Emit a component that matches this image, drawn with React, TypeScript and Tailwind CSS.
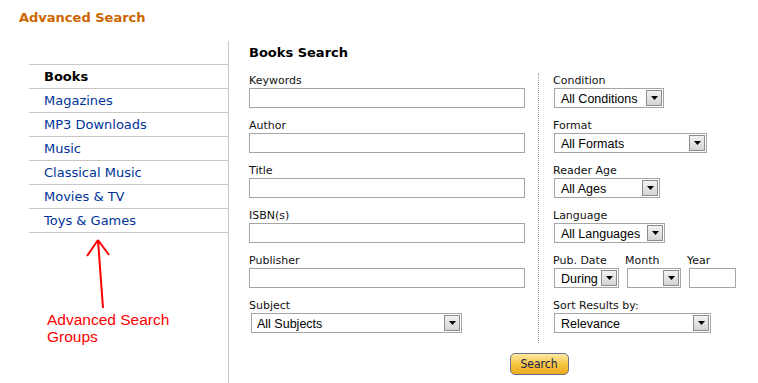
import React from "react";

const groups = ["Books", "Magazines", "MP3 Downloads", "Music", "Classical Music", "Movies & TV", "Toys & Games"];

function Arrow() {
  return (
    <div className="w-[16px] h-[16px] mr-[1px] border border-[#8c8c8c] bg-gradient-to-b from-[#f2f2f2] to-[#d4d4d4] flex items-center justify-center shrink-0">
      <svg width="7" height="4" viewBox="0 0 7 4">
        <path d="M0 0h7L3.5 4z" fill="#000" />
      </svg>
    </div>
  );
}

function Select({ className, text, pad = "pl-[6px]" }: { className: string; text?: string; pad?: string }) {
  return (
    <div className={`h-[20px] border border-[#a5a5a5] bg-white flex items-center ${className}`}>
      <span className={`flex-1 ${pad} font-['Liberation_Sans',Arial,sans-serif] text-[12.5px] leading-[18px] pt-[1px] text-[#000] whitespace-nowrap overflow-hidden`}>
        {text}
      </span>
      <Arrow />
    </div>
  );
}

function Label({ children }: { children: React.ReactNode }) {
  return <div className="text-[11px] leading-[14px] text-[#111] whitespace-nowrap">{children}</div>;
}

function TextField({ label }: { label: string }) {
  return (
    <div className="mb-[11px]">
      <Label>{label}</Label>
      <div className="w-[276px] h-[20px] border border-[#a5a5a5] bg-white" />
    </div>
  );
}

export default function App() {
  return (
    <div className="relative w-[758px] h-[383px] overflow-hidden bg-white font-['DejaVu_Sans',Verdana,sans-serif]">
      <h1 className="pt-[9px] pl-[19px] text-[13px] leading-[18px] font-bold text-[#cc6600]">Advanced Search</h1>

      <div className="flex mt-[14px] h-[342px]">
        {/* left group list */}
        <div className="ml-[29px] w-[200px] shrink-0 border-r border-[#c8c8c8] pt-[23px]">
          <ul className="border-t border-[#c8c8c8]">
            {groups.map((g, i) => (
              <li
                key={g}
                className={`h-[24px] border-b border-[#c8c8c8] pl-[15px] text-[13px] leading-[23px] ${
                  i === 0 ? "font-bold text-black" : "text-[#003399]"
                }`}
              >
                {g}
              </li>
            ))}
          </ul>
        </div>

        {/* form */}
        <div className="pl-[20px] pt-[3px] shrink-0">
          <h2 className="text-[13px] leading-[18px] font-bold text-black">Books Search</h2>

          <div className="flex mt-[11px]">
            <div className="w-[290px] border-r border-dotted border-[#999] pt-[1px] pb-[10px]">
              <TextField label="Keywords" />
              <TextField label="Author" />
              <TextField label="Title" />
              <TextField label="ISBN(s)" />
              <TextField label="Publisher" />
              <div>
                <Label>Subject</Label>
                <Select className="ml-[2px] w-[211px]" text="All Subjects" pad="pl-[5px]" />
              </div>
            </div>

            <div className="w-[290px] pl-[14px] pt-[1px]">
              <div className="mb-[11px]">
                <Label>Condition</Label>
                <Select className="ml-[1px] w-[110px]" text="All Conditions" />
              </div>
              <div className="mb-[11px]">
                <Label>Format</Label>
                <Select className="ml-[1px] w-[153px]" text="All Formats" />
              </div>
              <div className="mb-[11px]">
                <Label>Reader Age</Label>
                <Select className="ml-[1px] w-[106px]" text="All Ages" />
              </div>
              <div className="mb-[11px]">
                <Label>Language</Label>
                <Select className="ml-[1px] w-[111px]" text="All Languages" />
              </div>
              <div className="flex mb-[11px]">
                <div className="w-[72px]">
                  <Label>Pub. Date</Label>
                  <Select className="ml-[1px] w-[65px]" text="During" />
                </div>
                <div className="w-[62px]">
                  <Label>Month</Label>
                  <Select className="ml-[2px] w-[54px]" />
                </div>
                <div>
                  <Label>Year</Label>
                  <div className="ml-[2px] w-[47px] h-[20px] border border-[#a5a5a5] bg-white" />
                </div>
              </div>
              <div>
                <Label>Sort Results by:</Label>
                <Select className="ml-[1px] w-[157px]" text="Relevance" />
              </div>
            </div>
          </div>

          <div className="flex justify-center mt-[10px]">
            <button className="w-[59px] h-[22px] rounded-[5px] border border-[#6b6f8e] bg-gradient-to-b from-[#fde9a0] via-[#f7c741] to-[#eda91c] font-['DejaVu_Sans_Condensed','Liberation_Sans',sans-serif] text-[12px] leading-[20px] text-[#141a4a]">
              Search
            </button>
          </div>
        </div>
      </div>

      {/* annotation */}
      <svg className="absolute left-[80px] top-[235px]" width="40" height="80" viewBox="0 0 40 80">
        <path d="M23 73L18 5M18 5L7 21M18 5L29 20" stroke="#ff0000" strokeWidth="2" fill="none" />
      </svg>
      <div className="absolute left-[47px] top-[311px] font-['Liberation_Sans',Arial,sans-serif] text-[15.5px] leading-[17px] text-[#ff0000]">
        Advanced Search
        <br />
        Groups
      </div>
    </div>
  );
}
